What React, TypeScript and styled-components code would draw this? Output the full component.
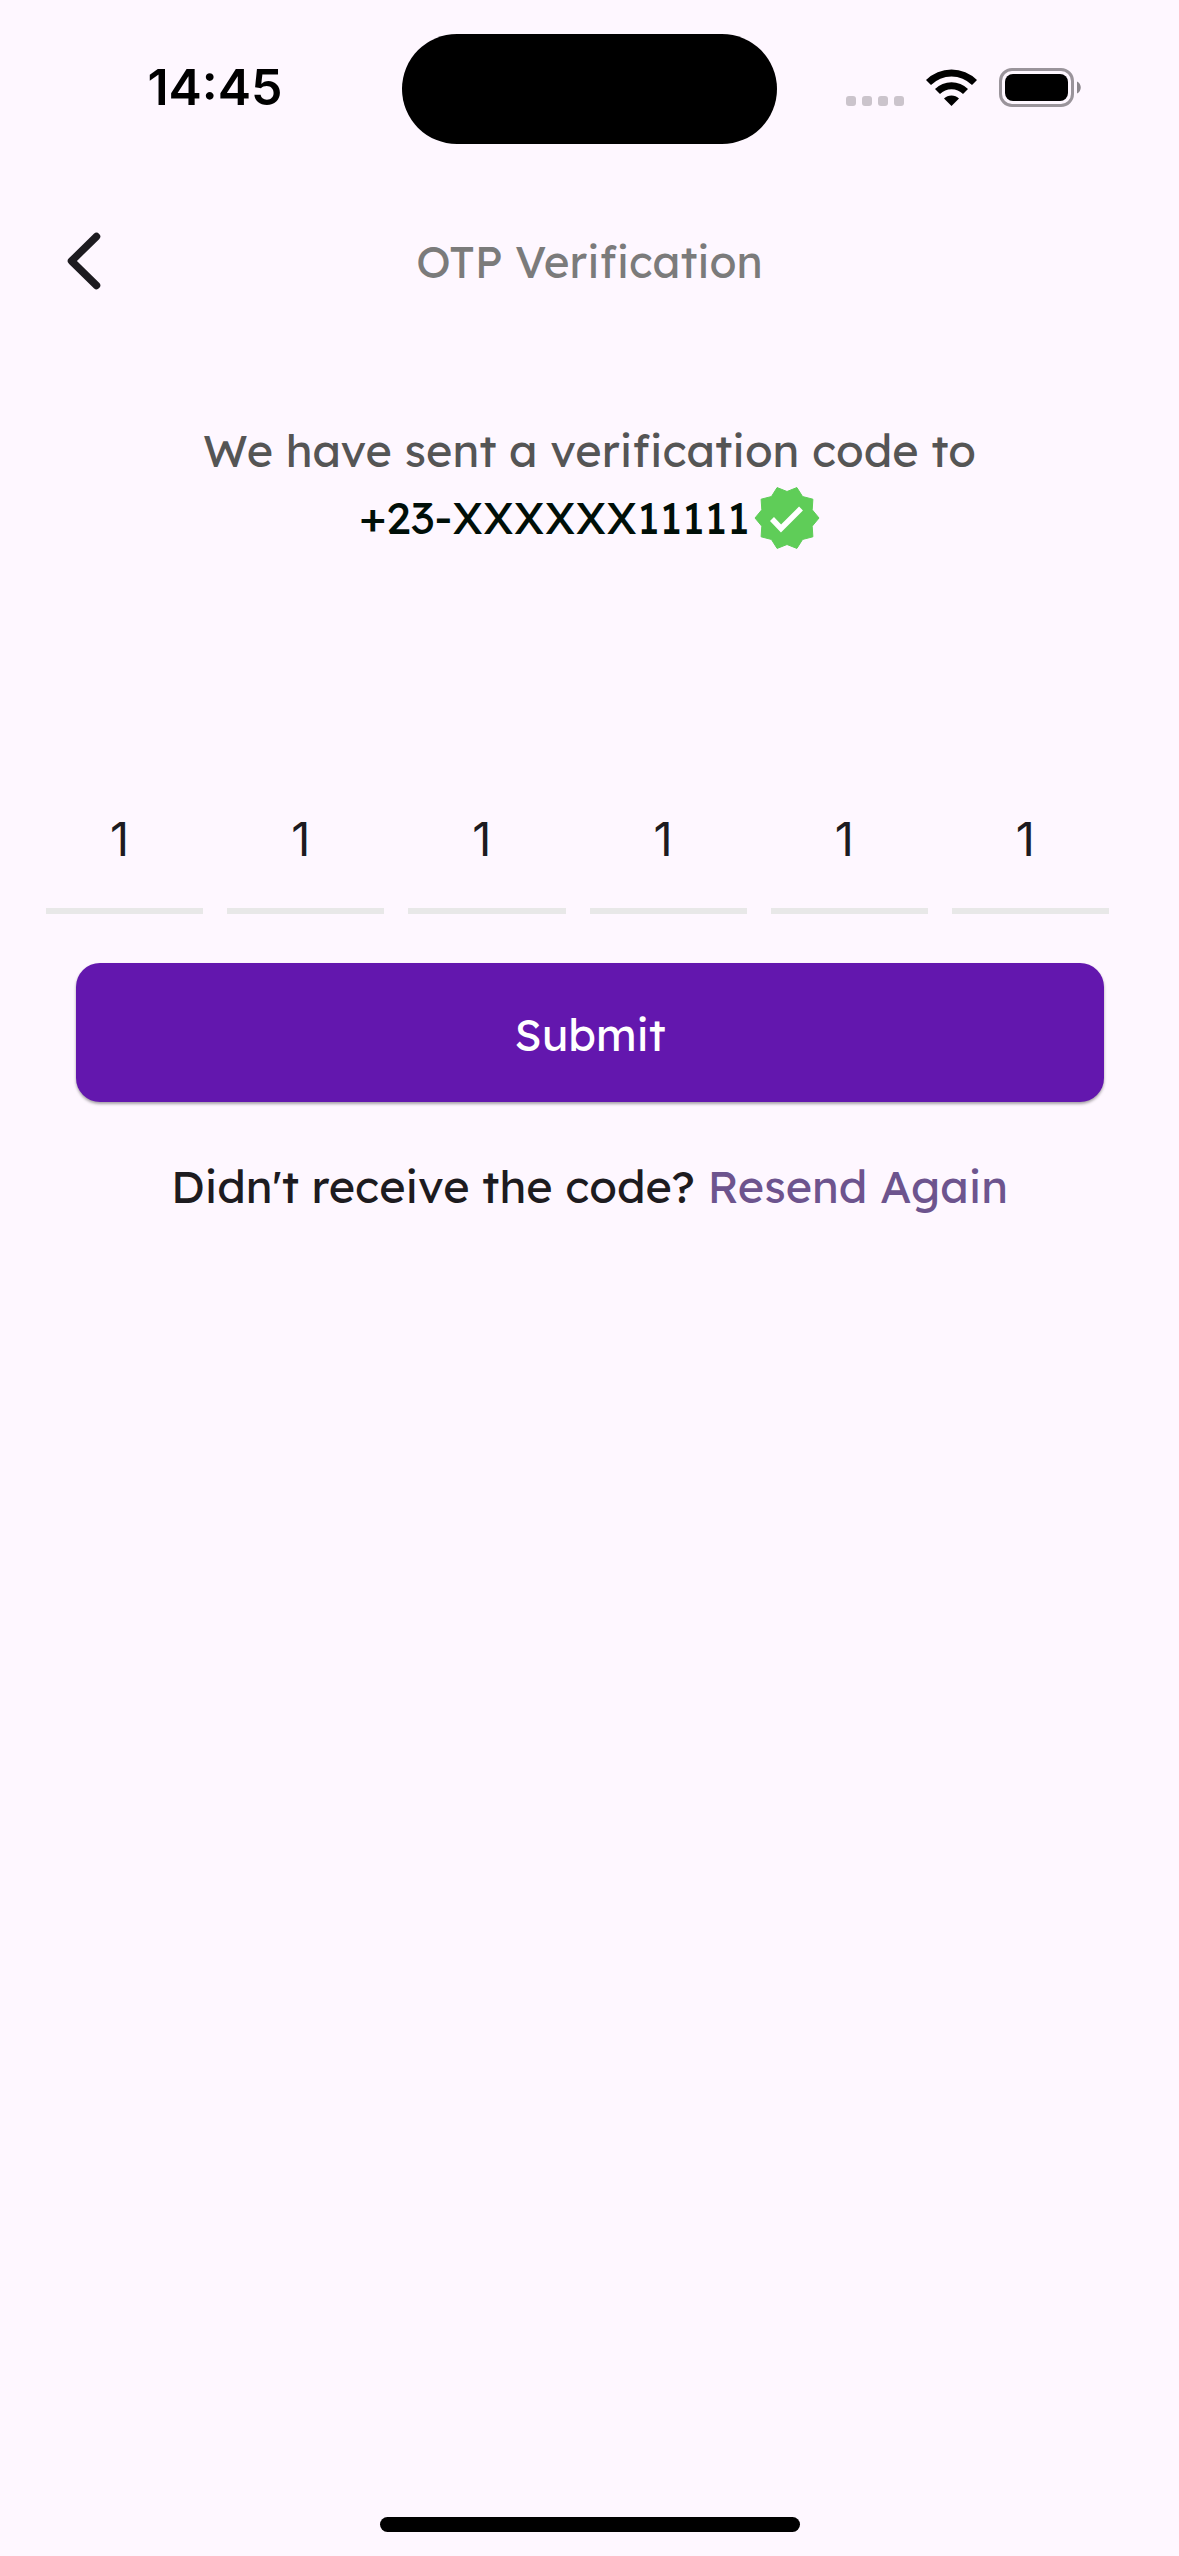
import React, { useRef, useState } from "react";
import styled, { createGlobalStyle } from "styled-components";

const GlobalStyle = createGlobalStyle`
  *, *::before, *::after { box-sizing: border-box; }
  body {
    margin: 0;
    background: #fef7ff;
    color: #1d1b20;
    font-family: Lexend, Inter, "Liberation Sans", sans-serif;
    font-size: 45px;
    line-height: 67px;
  }
  button, input { font: inherit; color: inherit; }
`;

const Screen = styled.div`
  min-height: 100vh;
  display: flex;
  flex-direction: column;
`;

const StatusBar = styled.div`
  display: grid;
  grid-template-columns: 1fr 375px 1fr;
  align-items: center;
  padding: 34px 28px 33px;
  color: #000;
`;

const Clock = styled.time`
  justify-self: center;
  padding-bottom: 3px;
  font-family: Inter, sans-serif;
  font-size: 50px;
  font-weight: 600;
`;

const Island = styled.div`
  height: 110px;
  border-radius: 55px;
  background: #000;
`;

const StatusIcons = styled.div`
  justify-self: center;
  display: flex;
  align-items: center;
  padding-right: 1px;
`;

const AppBar = styled.header`
  display: grid;
  grid-template-columns: 168px 1fr 168px;
  align-items: center;
  height: 168px;
`;

const BackButton = styled.button`
  display: flex;
  align-items: center;
  justify-content: center;
  height: 144px;
  padding: 0;
  border: 0;
  background: none;
  cursor: pointer;
`;

const Title = styled.h1`
  margin: 0;
  text-align: center;
  font-size: 44px;
  font-weight: 400;
  color: #7b7b7b;
`;

const Message = styled.section`
  display: flex;
  flex-direction: column;
  align-items: center;
  padding-top: 72px;
  color: #555;
`;

const Line = styled.p`
  margin: 0;
`;

const Phone = styled.p`
  display: flex;
  align-items: center;
  gap: 4px;
  margin: 0;
  color: #000f08;
`;

const CodeForm = styled.form`
  display: flex;
  flex-direction: column;
  padding-top: 213px;
`;

const CodeRow = styled.div`
  display: grid;
  grid-template-columns: repeat(6, 1fr);
  gap: 24px;
  padding: 0 70px 0 46px;
`;

const Digit = styled.input`
  width: 100%;
  height: 150px;
  padding: 4px 10px 0 0;
  border: 0;
  border-bottom: 6px solid #e8e8e8;
  border-radius: 0;
  outline: 0;
  background: none;
  text-align: center;
  font-family: Inter, sans-serif;
  font-size: 47px;
`;

const Submit = styled.button`
  height: 139px;
  margin: 49px 75px 0 76px;
  padding: 4px 0 0;
  border: 0;
  border-radius: 24px;
  background: #6317ae;
  box-shadow: 0 2px 3px rgba(0, 0, 0, 0.35);
  color: #fff;
  font-size: 44px;
  cursor: pointer;
`;

const Resend = styled.p`
  margin: 51px 0 0;
  text-align: center;
`;

const ResendLink = styled.a`
  color: #6d548e;
  text-decoration: none;
`;

const HomeIndicator = styled.div`
  align-self: center;
  width: 420px;
  height: 15px;
  margin: auto 0 24px;
  border-radius: 8px;
  background: #000;
`;

const starPoints = Array.from({ length: 20 }, (_, i) => {
  const radius = i % 2 === 0 ? 32 : 26.5;
  const angle = (i * Math.PI) / 10;
  return `${(33 + radius * Math.cos(angle)).toFixed(2)},${(33 + radius * Math.sin(angle)).toFixed(2)}`;
}).join(" ");

function VerifiedBadge() {
  return (
    <svg width="66" height="66" viewBox="0 0 66 66" role="img" aria-label="Verified">
      <polygon points={starPoints} fill="#5fcd58" stroke="#5fcd58" strokeWidth="1" strokeLinejoin="round" />
      <path d="M18 34l9 9.500L47 23.500" fill="none" stroke="#fff" strokeWidth="5.500" />
    </svg>
  );
}

function StatusGlyphs() {
  return (
    <svg width="236" height="42" viewBox="0 0 236 42" aria-hidden="true">
      <g fill="#cbc4cc">
        {[0, 16, 32, 48].map((x) => (
          <rect key={x} x={x} y="28" width="10" height="10" rx="3" />
        ))}
      </g>
      <g fill="#000">
        <path d="M80 12a36 36 0 0 1 51 0l-5 5a29 29 0 0 0-41 0z" />
        <path d="M89 21a23.500 23.500 0 0 1 33 0l-5 5a16.500 16.500 0 0 0-23 0z" />
        <path d="M98 30.500a10.600 10.600 0 0 1 15 0l-7.500 7.500z" />
      </g>
      <rect x="154.500" y="1.500" width="72" height="36" rx="11.500" fill="none" stroke="#9a949b" strokeWidth="3" />
      <rect x="159" y="6" width="63" height="27" rx="8" fill="#000" />
      <path d="M231 13.500c5 2 5 10 0 12z" fill="#8b868c" />
    </svg>
  );
}

export default function App() {
  const [code, setCode] = useState(["1", "1", "1", "1", "1", "1"]);
  const fields = useRef<(HTMLInputElement | null)[]>([]);

  const update = (index: number, value: string) => {
    const digit = value.replace(/\D/g, "").slice(-1);
    setCode((current) => current.map((old, i) => (i === index ? digit : old)));
    if (digit) fields.current[index + 1]?.focus();
  };

  return (
    <>
      <GlobalStyle />
      <Screen>
        <StatusBar>
          <Clock>14:45</Clock>
          <Island />
          <StatusIcons>
            <StatusGlyphs />
          </StatusIcons>
        </StatusBar>
        <AppBar>
          <BackButton type="button" aria-label="Back">
            <svg width="34" height="58" viewBox="0 0 34 58" fill="none" aria-hidden="true">
              <path d="M29.500 4.500L4.500 29l25 24.500" stroke="#1d1b20" strokeWidth="7.500" strokeLinecap="round" strokeLinejoin="round" />
            </svg>
          </BackButton>
          <Title>OTP Verification</Title>
        </AppBar>
        <main>
          <Message>
            <Line>We have sent a verification code to</Line>
            <Phone>
              +23-XXXXXX11111
              <VerifiedBadge />
            </Phone>
          </Message>
          <CodeForm onSubmit={(event) => event.preventDefault()}>
            <CodeRow>
              {code.map((digit, i) => (
                <Digit
                  key={i}
                  ref={(node) => {
                    fields.current[i] = node;
                  }}
                  aria-label={`Digit ${i + 1}`}
                  inputMode="numeric"
                  value={digit}
                  onChange={(event) => update(i, event.target.value)}
                />
              ))}
            </CodeRow>
            <Submit type="submit">Submit</Submit>
          </CodeForm>
          <Resend>
            Didn't receive the code? <ResendLink href="#resend">Resend Again</ResendLink>
          </Resend>
        </main>
        <HomeIndicator />
      </Screen>
    </>
  );
}
